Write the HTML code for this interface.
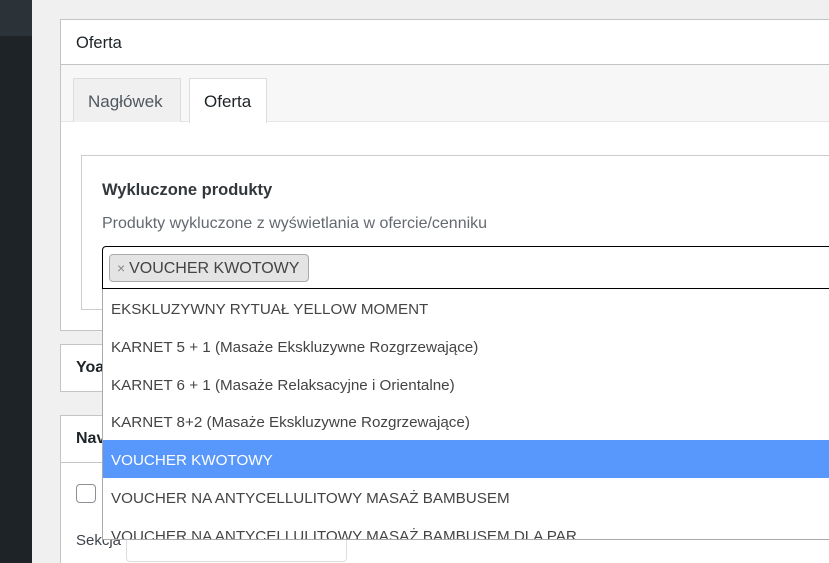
<!DOCTYPE html>
<html><head><meta charset="utf-8"><style>
*{box-sizing:border-box;margin:0;padding:0}
html,body{width:829px;height:563px;overflow:hidden}
body{background:#f0f0f1;font-family:"Liberation Sans",sans-serif;position:relative;color:#1d2327}
.abs{position:absolute}
.side{left:0;top:0;width:32px;height:563px;background:#1d2327}
.side2{left:0;top:0;width:32px;height:36px;background:#2c3338}
.panel{left:60px;top:19px;width:800px;height:312px;background:#fff;border:1px solid #c3c4c7}
.hdr{left:0;top:0;right:0;height:45px;border-bottom:1px solid #c3c4c7;font-size:16.5px;padding:14px 0 0 15px}
.tabs{left:0;top:45px;right:0;height:57px;background:#f7f7f7;border-bottom:1px solid #e6e6e6}
.tab{top:13px;height:44px;border:1px solid #ddd;border-bottom:none;font-size:17px;padding:13px 0 0 14px}
.inner{left:20px;top:135px;width:800px;height:155px;border:1px solid #ccc}
.box{background:#fff;border:1px solid #c3c4c7}
.sel{left:102px;top:246px;width:740px;height:43px;border:1px solid #000;border-radius:4px 0 0 0;background:#fff}
.tag{left:6px;top:7px;width:200px;height:28px;background:#e4e4e4;border:1px solid #aaa;border-radius:4px;font-size:16px;color:#444;padding:5px 0 0 7px}
.list{left:102px;top:289px;width:740px;height:251px;background:#fff;border-left:1px solid #aaa;border-bottom:1px solid #aaa;overflow:hidden}
.it{height:37.8px;padding:12px 0 0 8px;font-size:15.2px;color:#444;white-space:nowrap}
.hl{background:#5897fb;color:#fff}
</style></head><body>
<div class="abs side"></div><div class="abs side2"></div>
<div class="abs panel">
 <div class="abs hdr">Oferta</div>
 <div class="abs tabs">
  <div class="abs tab" style="left:12px;width:108px;background:#f0f0f1;color:#50575e">Nagłówek</div>
  <div class="abs tab" style="left:128px;width:78px;background:#fff;height:45px">Oferta</div>
 </div>
 <div class="abs inner">
  <div class="abs" style="left:20px;top:25px;font-size:16.5px;font-weight:bold;color:#32373c">Wykluczone produkty</div>
  <div class="abs" style="left:20px;top:59px;font-size:16px;color:#646970">Produkty wykluczone z wyświetlania w ofercie/cenniku</div>
 </div>
</div>
<div class="abs box" style="left:60px;top:344px;width:800px;height:48px"><div class="abs" style="left:15px;top:14px;font-size:16px;font-weight:bold">Yoa</div></div>
<div class="abs box" style="left:60px;top:415px;width:800px;height:160px">
 <div class="abs" style="left:15px;top:14px;font-size:16px;font-weight:bold">Nav</div>
 <div class="abs" style="left:0;top:46px;right:0;border-top:1px solid #c3c4c7"></div>
 <div class="abs" style="left:15px;top:68px;width:20px;height:19px;border:1px solid #8c8f94;border-radius:4px"></div>
 <div class="abs" style="left:15px;top:116px;font-size:15px;color:#3c434a">Sekcja</div>
 <div class="abs" style="left:65px;top:114px;width:221px;height:32px;border:1px solid #ddd;border-radius:4px"></div>
</div>
<div class="abs sel"><div class="abs tag"><span style="color:#888;font-size:14px">× </span>VOUCHER KWOTOWY</div></div>
<div class="abs list">
<div class="it">EKSKLUZYWNY RYTUAŁ YELLOW MOMENT</div>
<div class="it">KARNET 5 + 1 (Masaże Ekskluzywne Rozgrzewające)</div>
<div class="it">KARNET 6 + 1 (Masaże Relaksacyjne i Orientalne)</div>
<div class="it">KARNET 8+2 (Masaże Ekskluzywne Rozgrzewające)</div>
<div class="it hl">VOUCHER KWOTOWY</div>
<div class="it">VOUCHER NA ANTYCELLULITOWY MASAŻ BAMBUSEM</div>
<div class="it">VOUCHER NA ANTYCELLULITOWY MASAŻ BAMBUSEM DLA PAR</div>
</div>
</body></html>
